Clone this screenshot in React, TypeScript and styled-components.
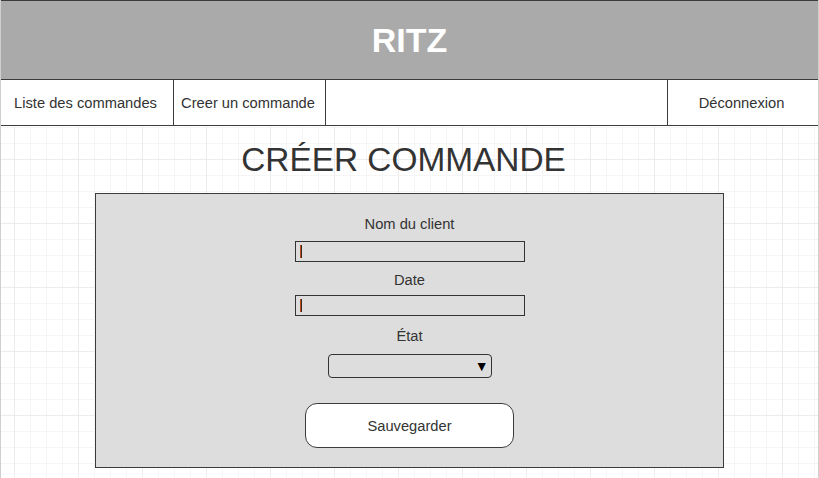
import React from 'react';
import styled, {createGlobalStyle} from "styled-components";

const GlobalStyle = createGlobalStyle`
    html, body {
        margin: 0;
        padding: 0;
        background: #ffffff;
    }
    * {
        box-sizing: border-box;
    }
`

const navItems = [
    {label: 'Liste des commandes', width: 173},
    {label: 'Creer un commande', width: 152},
    {label: '', width: 342},
    {label: 'Déconnexion', width: 151},
];

export default function App() {
    return (
        <>
            <GlobalStyle/>
            <Page>
                <Header>
                    <Brand>RITZ</Brand>
                </Header>
                <Nav>
                    {navItems.map((item, i) => (
                        <NavCell key={i} $width={item.width} $last={i === navItems.length - 1}>
                            {item.label}
                        </NavCell>
                    ))}
                </Nav>

                <Title>CRÉER COMMANDE</Title>

                <FormPanel>
                    <Label $top={22}>Nom du client</Label>
                    <TextInput $top={9}>
                        <Caret/>
                    </TextInput>

                    <Label $top={10}>Date</Label>
                    <TextInput $top={7}>
                        <Caret/>
                    </TextInput>

                    <Label $top={12}>État</Label>
                    <Select>
                        <Arrow>▼</Arrow>
                    </Select>

                    <SaveButton>Sauvegarder</SaveButton>
                </FormPanel>
            </Page>
        </>
    );
}

const Page = styled.div`
    width: 819px;
    height: 478px;
    overflow: hidden;
    font-family: "Liberation Sans", Arial, Helvetica, sans-serif;
    color: #333333;
    border-left: 1px solid #cfcfcf;
    border-right: 1px solid #cfcfcf;
    background-color: #ffffff;
    background-image:
        linear-gradient(to right, #ececec 1px, transparent 1px),
        linear-gradient(to bottom, #ececec 1px, transparent 1px),
        linear-gradient(to right, #f5f5f5 1px, transparent 1px),
        linear-gradient(to bottom, #f5f5f5 1px, transparent 1px);
    background-size: 64px 64px, 64px 64px, 16px 16px, 16px 16px;
    background-position: 14px 31px, 14px 31px, 14px 15px, 14px 15px;
    background-origin: border-box;
`

const Header = styled.header`
    height: 80px;
    margin-left: -1px;
    margin-right: -1px;
    background: #aaaaaa;
    border: 1px solid #3c3c3c;
    display: flex;
    align-items: center;
    justify-content: center;
`

const Brand = styled.h1`
    margin: 0;
    font-size: 34px;
    font-weight: bold;
    color: #ffffff;
`

const Nav = styled.nav`
    display: flex;
    height: 46px;
    margin-left: -1px;
    margin-right: -1px;
    background: #ffffff;
    border-left: 1px solid #3c3c3c;
    border-bottom: 1px solid #3c3c3c;
`

const NavCell = styled.div<{ $width: number; $last?: boolean }>`
    width: ${p => p.$width}px;
    flex: ${p => p.$last ? '1' : 'none'};
    border-right: 1px solid #3c3c3c;
    display: flex;
    align-items: center;
    justify-content: center;
    padding-right: 3px;
    font-size: 14.7px;
    color: #333333;
`

const Title = styled.h2`
    margin: 14px 0 13px;
    padding-right: 12px;
    height: 40px;
    line-height: 40px;
    text-align: center;
    font-size: 33.4px;
    font-weight: normal;
    color: #333333;
`

const FormPanel = styled.section`
    width: 629px;
    height: 275px;
    margin: 0 auto;
    background: #dddddd;
    border: 1px solid #3c3c3c;
    display: flex;
    flex-direction: column;
    align-items: center;
`

const Label = styled.label<{ $top: number }>`
    margin-top: ${p => p.$top}px;
    line-height: 16px;
    font-size: 14.7px;
    color: #333333;
`

const TextInput = styled.div<{ $top: number }>`
    margin-top: ${p => p.$top}px;
    width: 230px;
    height: 21px;
    border: 1px solid #333333;
    background: #dddddd;
    display: flex;
    align-items: center;
    padding-left: 4px;
`

const Caret = styled.span`
    width: 2px;
    height: 13px;
    border-left: 1px solid #b84a1a;
    border-right: 1px solid #3a2a22;
`

const Select = styled.div`
    margin-top: 10px;
    width: 164px;
    height: 24px;
    border: 1px solid #333333;
    border-radius: 4px;
    background: #dddddd;
    display: flex;
    align-items: center;
    justify-content: flex-end;
    padding-right: 2px;
`

const Arrow = styled.span`
    font-size: 14px;
    color: #000000;
    line-height: 1;
`

const SaveButton = styled.button`
    margin-top: 25px;
    width: 209px;
    height: 45px;
    border: 1px solid #3c3c3c;
    border-radius: 12px;
    background: #ffffff;
    font-family: "Liberation Sans", Arial, Helvetica, sans-serif;
    font-size: 14.7px;
    color: #333333;
    padding: 0;
`
